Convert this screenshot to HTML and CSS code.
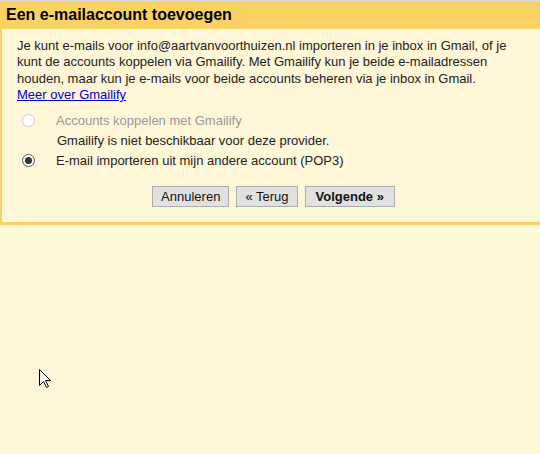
FILE: index.html
```html
<!DOCTYPE html>
<html lang="nl">
<head>
  <meta charset="UTF-8">
  <meta name="viewport" content="width=device-width, initial-scale=1.0">
  <title>Een e-mailaccount toevoegen</title>
  <link rel="stylesheet" href="styles.css">
</head>
<body>
  <div class="topline"></div>
  <div class="header">Een e-mailaccount toevoegen</div>
  <div class="panel">
    <p class="intro">
      Je kunt e-mails voor info@aartvanvoorthuizen.nl importeren in je inbox in Gmail, of je
      kunt de accounts koppelen via Gmailify. Met Gmailify kun je beide e-mailadressen
      houden, maar kun je e-mails voor beide accounts beheren via je inbox in Gmail.<br>
      <a href="#">Meer over Gmailify</a>
    </p>
    <div class="options">
      <div class="option disabled">
        <span class="radio"></span>
        <span class="label">Accounts koppelen met Gmailify</span>
      </div>
      <div class="note">Gmailify is niet beschikbaar voor deze provider.</div>
      <div class="option">
        <span class="radio checked"></span>
        <span class="label">E-mail importeren uit mijn andere account (POP3)</span>
      </div>
    </div>
    <div class="buttons">
      <button type="button">Annuleren</button>
      <button type="button">&laquo; Terug</button>
      <button type="button" class="primary">Volgende &raquo;</button>
    </div>
  </div>
  <svg class="cursor" width="13" height="20" viewBox="0 0 13 20">
    <path d="M0.5 0.5 L0.5 16.5 L4.5 12.5 L7.5 18.5 L9.5 17.5 L6.5 11.5 L11.5 11.5 Z" fill="#fff" stroke="#000" stroke-width="1"/>
  </svg>
</body>
</html>
```

FILE: styles.css
```css
body {
  font-family: Arial, 'Liberation Sans', sans-serif;
  background: #fff7d7;
  color: #222;
  margin: 0;
  padding: 0;
  min-height: 100vh;
}
.topline {
  height: 1px;
  background: #d9d9d9;
}
.header {
  background: #fad163;
  height: 28px;
  line-height: 28px;
  padding-left: 6px;
  font-size: 16px;
  font-weight: bold;
  color: #000;
}
.panel {
  border-left: 2px solid #fad163;
  border-bottom: 3px solid #fad163;
  padding: 9px 15px 15px 15px;
}
.intro {
  margin: 0;
  font-size: 13px;
  line-height: 16.4px;
}
.intro a {
  color: #0000cc;
}
.options {
  margin-top: 7px;
  font-size: 13px;
}
.option {
  display: flex;
  align-items: center;
  height: 20px;
}
.option .radio {
  width: 11px;
  height: 11px;
  border: 1px solid #555;
  border-radius: 50%;
  background: #fff;
  margin: 0 21px 0 5px;
  display: flex;
  align-items: center;
  justify-content: center;
}
.option .radio.checked::after {
  content: '';
  width: 7px;
  height: 7px;
  border-radius: 50%;
  background: #333;
}
.option.disabled .radio {
  border-color: #ccc;
}
.option.disabled .label {
  color: #999;
}
.note {
  padding-left: 40px;
  height: 20px;
  line-height: 20px;
}
.buttons {
  display: flex;
  justify-content: center;
  gap: 7px;
  margin-top: 15px;
  padding-left: 5px;
}
button {
  font-family: Arial, 'Liberation Sans', sans-serif;
  font-size: 13px;
  color: #111;
  background: #e1e1e1;
  border: 1px solid #adadad;
  border-radius: 0;
  height: 21px;
  padding: 0 8px;
  cursor: pointer;
}
button.primary {
  font-weight: bold;
  padding: 0 10px;
}
.cursor {
  position: absolute;
  left: 39px;
  top: 369px;
}
```
